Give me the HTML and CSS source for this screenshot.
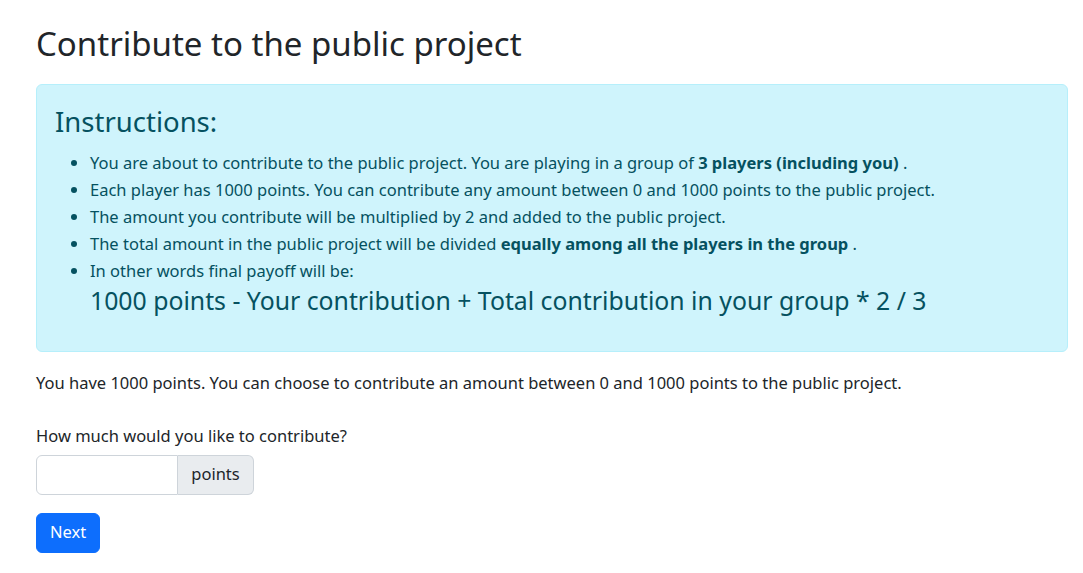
FILE: index.html
```html
<!DOCTYPE html>
<html lang="en">
<head>
<meta charset="utf-8">
<title>Contribute to the public project</title>
<link rel="stylesheet" href="styles.css">
</head>
<body>
<div class="page">
  <h1 class="title">Contribute to the public project</h1>
  <div class="alert">
    <h2 class="alert-heading">Instructions:</h2>
    <ul class="rules">
      <li>You are about to contribute to the public project. You are playing in a group of <b>3 players (including you)</b> .</li>
      <li>Each player has 1000 points. You can contribute any amount between 0 and 1000 points to the public project.</li>
      <li>The amount you contribute will be multiplied by 2 and added to the public project.</li>
      <li>The total amount in the public project will be divided <b>equally among all the players in the group</b> .</li>
      <li>In other words final payoff will be:
        <div class="formula">1000 points - Your contribution + Total contribution in your group * 2 / 3</div>
      </li>
    </ul>
  </div>
  <p class="lead-text">You have 1000 points. You can choose to contribute an amount between 0 and 1000 points to the public project.</p>
  <form class="form">
    <label class="label" for="contribution">How much would you like to contribute?</label>
    <div class="input-group">
      <input class="input" id="contribution" type="text">
      <span class="addon">points</span>
    </div>
    <button class="btn" type="button">Next</button>
  </form>
</div>
</body>
</html>
```

FILE: styles.css
```css
* { box-sizing: border-box; }
body {
  margin: 0;
  font-family: "Noto Sans", "Open Sans", sans-serif;
  font-size: 16.5px;
  line-height: 1.5;
  color: #212529;
  background: #fff;
}
.page {
  padding: 24px 15px 20px 36px;
}
.title {
  font-size: 33px;
  font-weight: 400;
  line-height: 1.2;
  margin: 0 0 20px;
}
.alert {
  background: #cff4fc;
  border: 1px solid #b6effb;
  color: #055160;
  border-radius: 6px;
  padding: 20px 18px 36px;
}
.alert-heading {
  font-size: 27.5px;
  font-weight: 400;
  line-height: 1.2;
  margin: 0 0 11px;
}
.rules {
  margin: 0;
  padding-left: 35px;
}
.rules li {
  line-height: 27px;
}
.rules b { font-weight: 700; }
.formula {
  font-size: 24.8px;
  line-height: 1.2;
  padding-top: 2px;
}
.lead-text {
  margin: 19px 0 28px;
}
.form { margin: 0; }
.label {
  display: block;
  margin-bottom: 6px;
}
.input-group {
  display: flex;
  width: 218px;
  margin-bottom: 18px;
}
.input {
  width: 142px;
  height: 40px;
  border: 1px solid #ced4da;
  border-radius: 6px 0 0 6px;
  padding: 6px 12px;
  font: inherit;
}
.addon {
  flex: 1;
  display: flex;
  align-items: center;
  justify-content: center;
  background: #e9ecef;
  border: 1px solid #ced4da;
  border-left: 0;
  border-radius: 0 6px 6px 0;
}
.btn {
  display: block;
  background: #0d6efd;
  color: #fff;
  border: 1px solid #0d6efd;
  border-radius: 6px;
  font: inherit;
  height: 40px;
  width: 64px;
  padding: 0;
}
```
